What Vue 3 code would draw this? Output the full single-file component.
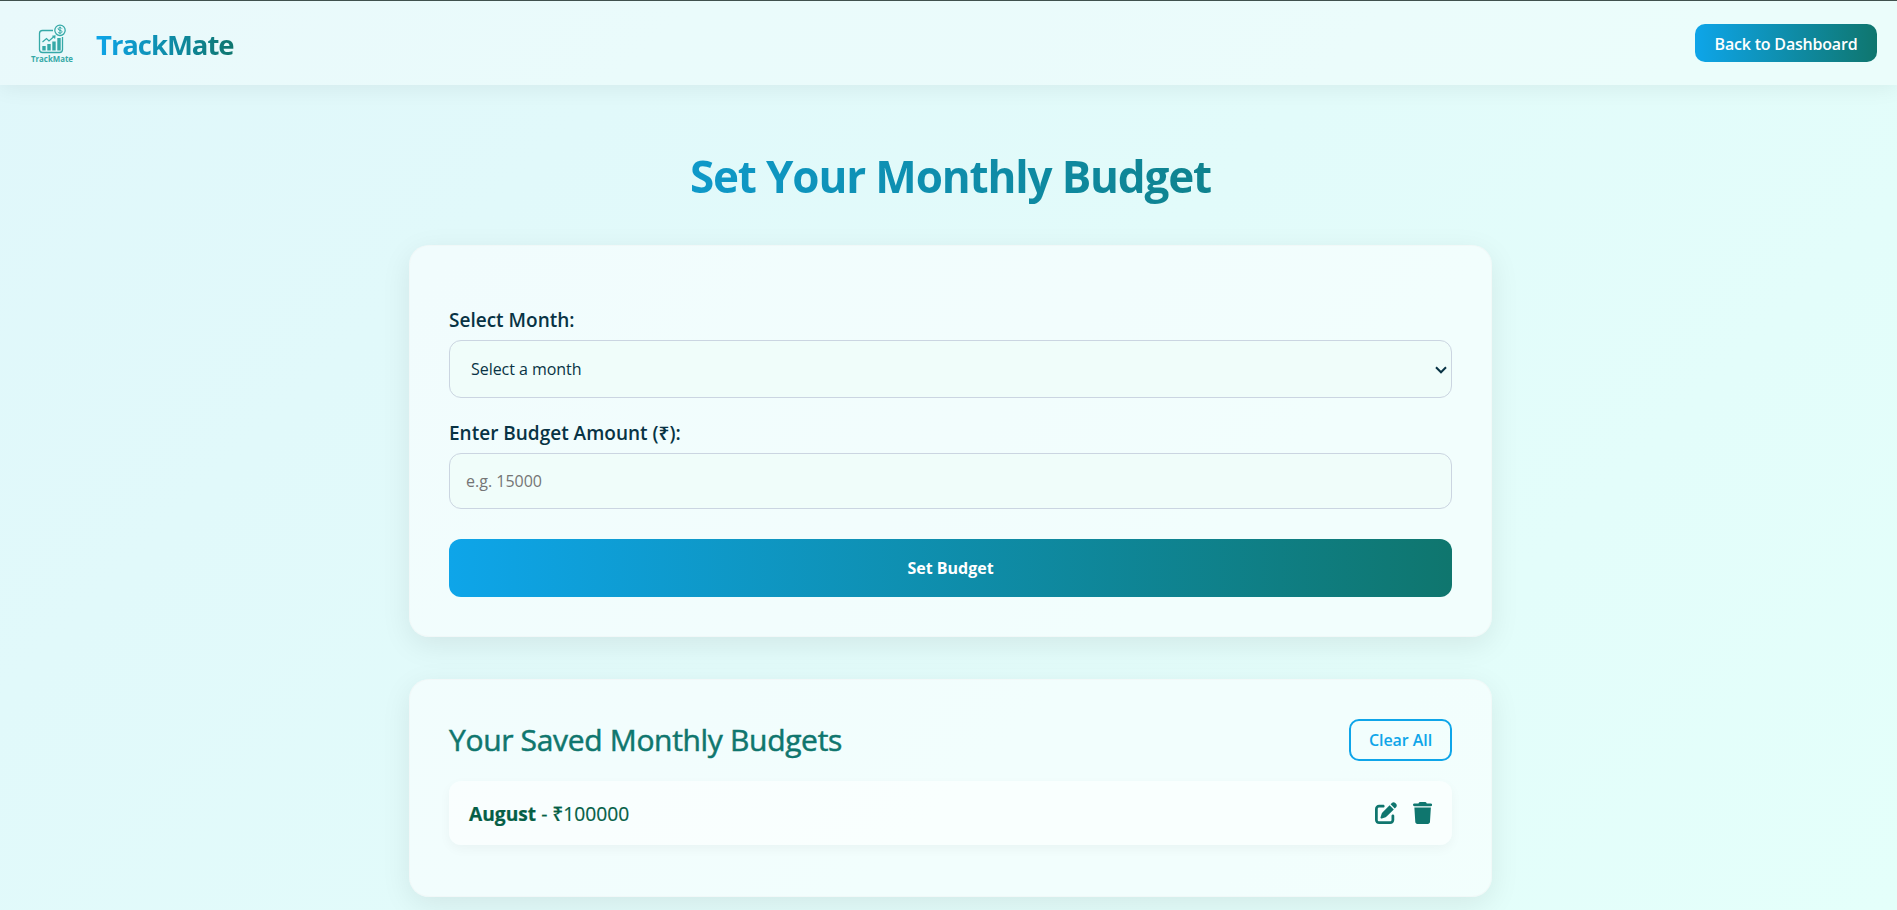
<script setup>
import { ref } from 'vue'

const months = ['January', 'February', 'March', 'April', 'May', 'June', 'July', 'August', 'September', 'October', 'November', 'December']
const month = ref('')
const amount = ref('')
const budgets = ref([{ month: 'August', amount: 100000 }])

function save() {
  if (!month.value || !amount.value) return
  budgets.value.push({ month: month.value, amount: amount.value })
}
function edit(b) {
  month.value = b.month
  amount.value = b.amount
}
function remove(i) {
  budgets.value.splice(i, 1)
}
</script>

<template>
  <div class="page">
    <header class="topbar">
      <div class="brand">
        <svg class="logo" viewBox="0 0 44 40" fill="none" stroke="#35a9a7">
          <path d="M23 6.500H12.500a3 3 0 0 0-3 3V25.500a3 3 0 0 0 3 3H29.500a3 3 0 0 0 3-3V13" stroke-width="1.300" />
          <circle cx="30" cy="6.300" r="5.200" stroke-width="1.300" />
          <path d="M31.900 4.600c-.4-.7-1-1-1.900-1-1.100 0-1.900.5-1.900 1.300 0 2 3.900.8 3.900 2.800 0 .9-.8 1.400-2 1.400-1 0-1.700-.4-2.100-1.100M30 2.600v7.400" stroke-width="1" />
          <path d="M12.500 18l4-3.500 2.500 2.500 5-4.500" stroke-width="1.200" />
          <path d="M22.300 12l3-.4-.3 3z" fill="#35a9a7" stroke-width=".5" />
          <path d="M14 26.500v-4.500M19 26.500v-6.500M24 26.500v-9M29 26.500V14" stroke-width="3.400" />
          <text x="22" y="37.500" text-anchor="middle" class="logo-text" textLength="42" lengthAdjust="spacingAndGlyphs">TrackMate</text>
        </svg>
        <span class="brand-name">TrackMate</span>
      </div>
      <button class="back">Back to Dashboard</button>
    </header>

    <main class="content">
      <h1 class="title">Set Your Monthly Budget</h1>

      <form class="card form" @submit.prevent="save">
        <label for="month">Select Month:</label>
        <div class="select-wrap">
          <select id="month" v-model="month">
            <option value="">Select a month</option>
            <option v-for="m in months" :key="m">{{ m }}</option>
          </select>
          <svg class="chevron" viewBox="0 0 12 8" fill="none" stroke="#083344" stroke-width="2"><path d="M1 1.300l5 5 5-5" /></svg>
        </div>
        <label for="amount">Enter Budget Amount (₹):</label>
        <input id="amount" v-model="amount" placeholder="e.g. 15000" />
        <button class="submit">Set Budget</button>
      </form>

      <section class="card saved">
        <div class="saved-head">
          <h2>Your Saved Monthly Budgets</h2>
          <button class="clear" @click="budgets = []">Clear All</button>
        </div>
        <ul>
          <li v-for="(b, i) in budgets" :key="b.month">
            <span class="entry"><strong>{{ b.month }}</strong> - ₹{{ b.amount }}</span>
            <span class="actions">
              <button class="icon" aria-label="Edit" @click="edit(b)">
                <svg width="22" height="22" viewBox="0 0 512 512" fill="currentColor"><path d="M471.600 21.700c-21.900-21.900-57.300-21.900-79.200 0L362.300 51.700l97.900 97.900 30.100-30.100c21.900-21.900 21.900-57.300 0-79.200L471.600 21.700zm-299.200 220c-6.100 6.100-10.800 13.600-13.500 21.900l-29.600 88.800c-2.900 8.600-.6 18.100 5.800 24.600s15.900 8.700 24.600 5.800l88.800-29.600c8.200-2.700 15.700-7.400 21.900-13.500L437.700 172.300 339.700 74.300 172.400 241.700zM96 64C43 64 0 107 0 160V416c0 53 43 96 96 96H352c53 0 96-43 96-96V320c0-17.700-14.300-32-32-32s-32 14.300-32 32v96c0 17.700-14.300 32-32 32H96c-17.700 0-32-14.300-32-32V160c0-17.700 14.300-32 32-32h96c17.700 0 32-14.300 32-32s-14.300-32-32-32H96z" /></svg>
              </button>
              <button class="icon" aria-label="Delete" @click="remove(i)">
                <svg width="19.250" height="22" viewBox="0 0 448 512" fill="currentColor"><path d="M135.200 17.700L128 32H32C14.300 32 0 46.300 0 64S14.300 96 32 96H416c17.700 0 32-14.300 32-32s-14.300-32-32-32H320l-7.200-14.300C307.400 6.800 296.300 0 284.200 0H163.800c-12.100 0-23.200 6.800-28.600 17.700zM416 128H32L53.200 467c1.600 25.300 22.600 45 47.900 45H346.900c25.300 0 46.300-19.700 47.900-45L416 128z" /></svg>
              </button>
            </span>
          </li>
        </ul>
      </section>
    </main>
  </div>
</template>

<style>
body {
  margin: 0;
  overflow: hidden;
}
</style>

<style scoped>
* {
  box-sizing: border-box;
}
.page {
  height: 910px;
  overflow: hidden;
  border-top: 1px solid #40514e;
  background: linear-gradient(135deg, #e0f7fa, #e4fffa);
  font-family: 'Open Sans', 'Noto Sans', sans-serif;
  color: #083344;
}
button,
input,
select {
  font-family: inherit;
}
.topbar {
  display: flex;
  align-items: center;
  justify-content: space-between;
  height: 84px;
  padding: 0 20px 0 30px;
  background: rgba(255, 255, 255, 0.3);
  box-shadow: 0 4px 20px rgba(0, 0, 0, 0.06);
}
.brand {
  display: flex;
  align-items: center;
  gap: 22px;
  padding-top: 2px;
}
.logo {
  width: 44px;
  height: 40px;
}
.logo-text {
  font: 700 8px 'Open Sans', sans-serif;
  fill: #35a9a7;
  stroke: none;
}
.brand-name {
  padding-top: 2px;
  font-size: 27.500px;
  font-weight: 700;
  line-height: 40px;
  letter-spacing: -1.050px;
  background: linear-gradient(90deg, #0ea5e9, #0f766e);
  background-clip: text;
  color: transparent;
}
.back {
  width: 182px;
  height: 38px;
  margin-bottom: 1px;
  padding: 2px 0 0;
  border: 0;
  border-radius: 10px;
  background: linear-gradient(90deg, #0ea5e9, #0f766e);
  color: #fff;
  font-size: 16px;
  font-weight: 600;
  letter-spacing: -0.200px;
  white-space: nowrap;
}
.content {
  width: 1083px;
  margin: 0 405px 0 409px;
  padding-top: 61px;
}
.title {
  margin: 0 0 39px;
  height: 60px;
  font-size: 44px;
  line-height: 60px;
  font-weight: 700;
  text-align: center;
  white-space: nowrap;
  letter-spacing: -1.150px;
  background: linear-gradient(90deg, #0ea5e9 0%, #0f766e 100%);
  background-clip: text;
  color: transparent;
}
.card {
  border: 1px solid rgba(240, 244, 244, 0.500);
  border-radius: 20px;
  background: rgba(255, 255, 255, 0.550);
  box-shadow: 0 8px 30px rgba(0, 0, 0, 0.080);
}
.form {
  display: flex;
  flex-direction: column;
  height: 392px;
  padding: 59px 39px 0;
}
label {
  height: 35px;
  font-size: 19px;
  line-height: 30px;
  font-weight: 600;
}
.select-wrap {
  position: relative;
  height: 58px;
  margin-bottom: 20px;
}
select,
input {
  width: 100%;
  border: 1px solid #cbd5e1;
  border-radius: 12px;
  background: #f0fdfa;
  color: #083344;
  font-size: 16px;
  outline: none;
}
select {
  height: 58px;
  padding: 0 21px;
  appearance: none;
  letter-spacing: -0.050px;
}
.chevron {
  position: absolute;
  right: 5px;
  top: 26px;
  width: 12px;
  height: 8px;
}
input {
  height: 56px;
  padding: 0 16px;
}
input::placeholder {
  color: #757575;
}
.submit {
  height: 58px;
  margin-top: 30px;
  padding: 0;
  border: 0;
  border-radius: 12px;
  background: linear-gradient(90deg, #0ea5e9, #0f766e);
  color: #fff;
  font-size: 16px;
  font-weight: 700;
}
.saved {
  height: 218px;
  margin-top: 42px;
  padding: 39px;
}
.saved-head {
  display: flex;
  align-items: center;
  justify-content: space-between;
  height: 42px;
}
h2 {
  margin: 0;
  color: #0f766e;
  font-size: 30px;
  font-weight: 500;
  line-height: 42px;
  letter-spacing: -0.330px;
  -webkit-text-stroke: 0.500px #0f766e;
}
.clear {
  width: 103px;
  height: 42px;
  padding: 0;
  border: 2px solid #0ea5e9;
  border-radius: 10px;
  background: transparent;
  color: #0ea5e9;
  font-size: 16px;
  font-weight: 600;
  letter-spacing: -0.050px;
}
ul {
  margin: 20px 0 0;
  padding: 0;
  list-style: none;
}
li {
  display: flex;
  align-items: center;
  justify-content: space-between;
  height: 64px;
  padding: 0 20px;
  border-radius: 12px;
  background: rgba(255, 255, 255, 0.500);
  box-shadow: 0 4px 12px rgba(0, 0, 0, 0.040);
  color: #065f46;
}
.entry {
  font-size: 19.200px;
  font-weight: 500;
  -webkit-text-stroke: 0.200px #065f46;
}
.actions {
  display: flex;
  gap: 16px;
}
.icon {
  display: flex;
  padding: 0;
  border: 0;
  background: none;
  color: #0f766e;
}
</style>
